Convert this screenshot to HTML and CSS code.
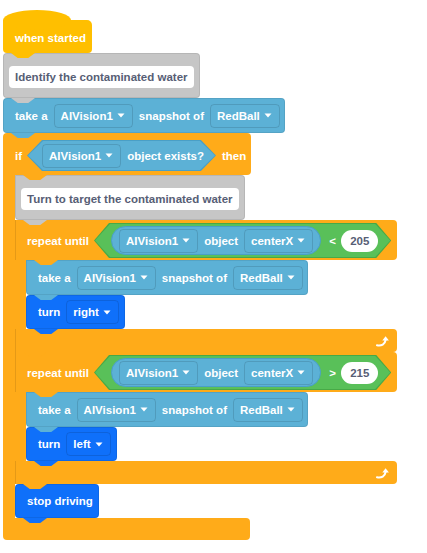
FILE: index.html
```html
<!DOCTYPE html>
<html lang="en">
<head>
    <meta charset="UTF-8">
    <meta name="viewport" content="width=device-width, initial-scale=1.0">
    <title>Contaminated Water</title>
    <link rel="stylesheet" href="styles.css">
</head>
<body>
<div class="script">
    <div class="hat">when started</div>

    <div class="block note-block"><span class="note">Identify the contaminated water</span></div>

    <div class="block sensing">
        <span>take a</span>
        <span class="drop">AIVision1 <svg class="caret" viewBox="0 0 8 5"><path d="M0.5 0.5h7L4 4.5z" fill="#fff"/></svg></span>
        <span>snapshot of</span>
        <span class="drop">RedBall <svg class="caret" viewBox="0 0 8 5"><path d="M0.5 0.5h7L4 4.5z" fill="#fff"/></svg></span>
    </div>

    <div class="c-block if-block">
        <div class="c-head">
            <span>if</span>
            <span class="hex blue-hex">
                <span class="hex-in">
                    <span class="drop">AIVision1 <svg class="caret" viewBox="0 0 8 5"><path d="M0.5 0.5h7L4 4.5z" fill="#fff"/></svg></span>
                    <span>object exists?</span>
                </span>
            </span>
            <span class="then">then</span>
        </div>
        <div class="c-body">
            <div class="block note-block"><span class="note">Turn to target the contaminated water</span></div>

            <div class="c-block loop">
                <div class="c-head">
                    <span>repeat until</span>
                    <span class="hex green-hex">
                        <span class="hex-in">
                            <span class="reporter">
                                <span class="drop">AIVision1 <svg class="caret" viewBox="0 0 8 5"><path d="M0.5 0.5h7L4 4.5z" fill="#fff"/></svg></span>
                                <span>object</span>
                                <span class="drop">centerX <svg class="caret" viewBox="0 0 8 5"><path d="M0.5 0.5h7L4 4.5z" fill="#fff"/></svg></span>
                            </span>
                            <span class="op">&lt;</span>
                            <span class="num">205</span>
                        </span>
                    </span>
                </div>
                <div class="c-body">
                    <div class="block sensing">
                        <span>take a</span>
                        <span class="drop">AIVision1 <svg class="caret" viewBox="0 0 8 5"><path d="M0.5 0.5h7L4 4.5z" fill="#fff"/></svg></span>
                        <span>snapshot of</span>
                        <span class="drop">RedBall <svg class="caret" viewBox="0 0 8 5"><path d="M0.5 0.5h7L4 4.5z" fill="#fff"/></svg></span>
                    </div>
                    <div class="block drive">
                        <span>turn</span>
                        <span class="drop">right <svg class="caret" viewBox="0 0 8 5"><path d="M0.5 0.5h7L4 4.5z" fill="#fff"/></svg></span>
                    </div>
                </div>
                <div class="c-foot">
                    <svg class="loop-arrow" width="14" height="12" viewBox="0 0 14 12"><path d="M1 10.3c4.5 0.8 8-1 8.6-5.3" fill="none" stroke="#fff" stroke-width="2" stroke-linecap="round"/><path d="M6.3 5.6L9.6 1.2L12.9 5.6z" fill="#fff"/></svg>
                </div>
            </div>

            <div class="c-block loop">
                <div class="c-head">
                    <span>repeat until</span>
                    <span class="hex green-hex">
                        <span class="hex-in">
                            <span class="reporter">
                                <span class="drop">AIVision1 <svg class="caret" viewBox="0 0 8 5"><path d="M0.5 0.5h7L4 4.5z" fill="#fff"/></svg></span>
                                <span>object</span>
                                <span class="drop">centerX <svg class="caret" viewBox="0 0 8 5"><path d="M0.5 0.5h7L4 4.5z" fill="#fff"/></svg></span>
                            </span>
                            <span class="op">&gt;</span>
                            <span class="num">215</span>
                        </span>
                    </span>
                </div>
                <div class="c-body">
                    <div class="block sensing">
                        <span>take a</span>
                        <span class="drop">AIVision1 <svg class="caret" viewBox="0 0 8 5"><path d="M0.5 0.5h7L4 4.5z" fill="#fff"/></svg></span>
                        <span>snapshot of</span>
                        <span class="drop">RedBall <svg class="caret" viewBox="0 0 8 5"><path d="M0.5 0.5h7L4 4.5z" fill="#fff"/></svg></span>
                    </div>
                    <div class="block drive">
                        <span>turn</span>
                        <span class="drop">left <svg class="caret" viewBox="0 0 8 5"><path d="M0.5 0.5h7L4 4.5z" fill="#fff"/></svg></span>
                    </div>
                </div>
                <div class="c-foot">
                    <svg class="loop-arrow" width="14" height="12" viewBox="0 0 14 12"><path d="M1 10.3c4.5 0.8 8-1 8.6-5.3" fill="none" stroke="#fff" stroke-width="2" stroke-linecap="round"/><path d="M6.3 5.6L9.6 1.2L12.9 5.6z" fill="#fff"/></svg>
                </div>
            </div>

            <div class="block drive">stop driving</div>
        </div>
        <div class="c-foot"></div>
    </div>
</div>
</body>
</html>
```

FILE: styles.css
```css
body {
    margin: 0;
    background: #fff;
    font-family: "Liberation Sans", Arial, sans-serif;
    font-weight: bold;
    font-size: 11.5px;
    color: #fff;
}
.script {
    display: flex;
    flex-direction: column;
    align-items: flex-start;
    padding: 20px 0 0 3px;
}

/* hat */
.hat {
    position: relative;
    display: flex;
    align-items: center;
    height: 33px;
    box-sizing: border-box;
    padding: 3px 6px 0 12px;
    background: #ffbf00;
    border-radius: 0 5px 4px 4px;
}
.hat::before {
    content: "";
    position: absolute;
    left: 0;
    top: -10px;
    width: 68px;
    height: 20px;
    border-radius: 50%;
    background: inherit;
}

/* tabs under each stack piece */
.hat::after,
.block::after,
.c-head::after,
.c-foot::after {
    content: "";
    position: absolute;
    left: 8px;
    top: 100%;
    width: 24px;
    height: 5px;
    background: inherit;
    clip-path: polygon(0 0, 100% 0, 72% 100%, 28% 100%);
    z-index: 2;
}

.block {
    position: relative;
    display: flex;
    align-items: center;
    gap: 6px;
    height: 35px;
    box-sizing: border-box;
    padding: 0 5px 0 12px;
    border-radius: 4px;
    box-shadow: inset 0 0 0 1px rgba(0, 0, 0, 0.08);
}
.note-block {
    background: #c6c6c6;
    height: 45px;
    padding: 3px 6px 0 6px;
}
.note {
    display: flex;
    align-items: center;
    height: 22px;
    padding: 0 6px;
    background: #fff;
    color: #575e75;
    border-radius: 4px;
}
.sensing {
    background: #5cb1d6;
}
.drive {
    background: #0f70fa;
    height: 34px;
    padding-right: 6px;
}

/* dropdown fields */
.drop {
    display: flex;
    align-items: center;
    gap: 4px;
    height: 24px;
    box-sizing: border-box;
    padding: 0 7px 0 6px;
    border: 1px solid rgba(0, 0, 0, 0.12);
    border-radius: 4px;
}
.caret {
    width: 8px;
    height: 5px;
}

/* C shaped blocks */
.c-block {
    display: flex;
    flex-direction: column;
    align-items: flex-start;
}
.c-head {
    position: relative;
    display: flex;
    align-items: center;
    gap: 5px;
    box-sizing: border-box;
    background: #ffab19;
    border-radius: 4px 4px 4px 0;
}
.c-head::after {
    left: 20px;
}
.c-body {
    display: flex;
    flex-direction: column;
    align-items: flex-start;
    border-left: 12px solid #ffab19;
}
.c-body > .block:first-child {
    border-top-left-radius: 0;
}
.c-foot {
    position: relative;
    display: flex;
    align-items: center;
    justify-content: flex-end;
    height: 23px;
    padding-right: 7px;
    box-sizing: border-box;
    background: #ffab19;
    border-radius: 0 4px 4px 4px;
}

.if-block > .c-head {
    height: 42px;
    padding: 3px 5px 0 12px;
}
.if-block > .c-foot {
    width: 247px;
    height: 22px;
}
.then {
    margin-left: 1px;
}

.loop {
    align-items: stretch;
}
.loop > .c-head {
    height: 40px;
    padding: 1px 6px 0 12px;
    border-top-left-radius: 0;
    box-shadow: inset 1px 0 0 rgba(0, 0, 0, 0.1);
}
.loop > .c-head::after {
    left: 19px;
}
.loop > .c-body {
    border-left-width: 11px;
}
.loop > .c-foot {
    border-bottom-left-radius: 0;
    box-shadow: inset 1px 0 0 rgba(0, 0, 0, 0.1);
}

/* boolean hexagons */
.hex {
    display: flex;
    padding: 1px;
    clip-path: polygon(15px 0, calc(100% - 15px) 0, 100% 50%, calc(100% - 15px) 100%, 15px 100%, 0 50%);
}
.hex-in {
    display: flex;
    align-items: center;
    clip-path: polygon(15px 0, calc(100% - 15px) 0, 100% 50%, calc(100% - 15px) 100%, 15px 100%, 0 50%);
}
.blue-hex {
    background: #4a9fc6;
}
.blue-hex .hex-in {
    height: 29px;
    gap: 6px;
    padding: 0 11px 0 14px;
    background: #5cb1d6;
}
.green-hex {
    background: #47a947;
}
.green-hex .hex-in {
    height: 33px;
    gap: 4px;
    padding: 0 12px 0 16px;
    background: #59c059;
}

.reporter {
    display: flex;
    align-items: center;
    gap: 6px;
    height: 29px;
    box-sizing: border-box;
    padding: 0 7px;
    background: #5cb1d6;
    border: 1px solid #4a9fc6;
    border-radius: 15px;
}
.op {
    margin-left: 4px;
    width: 8px;
}
.num {
    display: flex;
    align-items: center;
    justify-content: center;
    height: 22px;
    min-width: 37px;
    box-sizing: border-box;
    padding: 0 8px;
    background: #fff;
    color: #575e75;
    border-radius: 11px;
}
```
